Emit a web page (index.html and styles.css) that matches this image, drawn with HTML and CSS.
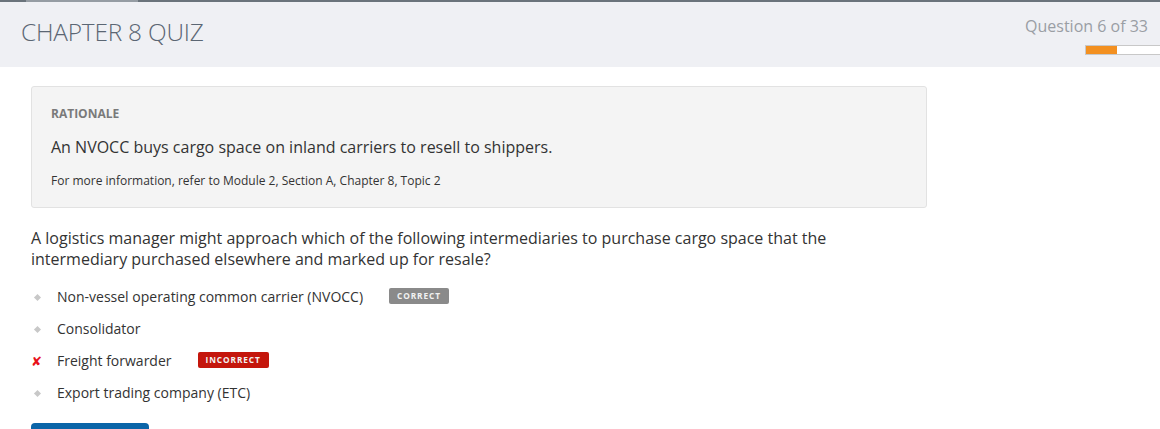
FILE: index.html
```html
<!DOCTYPE html>
<html>
<head>
<meta charset="utf-8">
<link rel="stylesheet" href="styles.css">
</head>
<body>
<div class="topline"><div class="topline-seg"></div></div>
<header class="header">
  <h1 class="title">CHAPTER 8 QUIZ</h1>
  <div class="progress-wrap">
    <div class="qcount">Question 6 of 33</div>
    <div class="progress"><div class="progress-fill" style="width:31px"></div></div>
  </div>
</header>
<main class="main">
  <section class="rationale">
    <div class="rationale-label">RATIONALE</div>
    <p class="rationale-text">An NVOCC buys cargo space on inland carriers to resell to shippers.</p>
    <p class="rationale-ref">For more information, refer to Module 2, Section A, Chapter 8, Topic 2</p>
  </section>
  <p class="question">A logistics manager might approach which of the following intermediaries to purchase cargo space that the intermediary purchased elsewhere and marked up for resale?</p>
  <ul class="options">
    <li class="option"><span class="mark"><span class="dot"></span></span><span class="opt-text">Non-vessel operating common carrier (NVOCC)</span><span class="badge badge-correct">CORRECT</span></li>
    <li class="option"><span class="mark"><span class="dot"></span></span><span class="opt-text">Consolidator</span></li>
    <li class="option"><span class="mark mark-x">✘</span><span class="opt-text">Freight forwarder</span><span class="badge badge-incorrect">INCORRECT</span></li>
    <li class="option"><span class="mark"><span class="dot"></span></span><span class="opt-text">Export trading company (ETC)</span></li>
  </ul>
  <div class="btn"></div>
</main>
</body>
</html>
```
FILE: styles.css
```css
* { box-sizing: border-box; }
html, body { margin: 0; padding: 0; }
body {
  font-family: "Open Sans", "Liberation Sans", sans-serif;
  color: #333;
  background: #fff;
  width: 1160px;
  height: 429px;
  overflow: hidden;
}
.topline {
  height: 2px;
  background: #6a737b;
  padding-left: 26px;
}
.topline-seg {
  width: 112px;
  height: 2px;
  background: #959ca3;
}
.header {
  height: 65px;
  background: #eff0f4;
  display: flex;
  justify-content: space-between;
  align-items: flex-start;
}
.title {
  margin: 0;
  padding: 15px 0 0 21px;
  font-size: 24.4px;
  line-height: 30px;
  font-weight: 300;
  color: #5b6673;
  letter-spacing: -0.2px;
}
.progress-wrap {
  display: flex;
  flex-direction: column;
  align-items: flex-end;
  padding-top: 13px;
}
.qcount {
  font-size: 16px;
  line-height: 22px;
  color: #9a9ea4;
  padding-right: 12px;
}
.progress {
  margin-top: 8px;
  width: 75px;
  height: 10px;
  border: 1px solid #c8c8c8;
  border-right: none;
  background: #fff;
}
.progress-fill {
  height: 100%;
  background: #f39020;
}
.main {
  padding: 19px 0 0 31px;
}
.rationale {
  width: 896px;
  background: #f4f4f4;
  border: 1px solid #e2e2e2;
  border-radius: 3px;
  padding: 18px 19px 18px;
}
.rationale-label {
  font-size: 12px;
  font-weight: 700;
  color: #7a7a7a;
  line-height: 17px;
}
.rationale-text {
  margin: 14px 0 0;
  font-size: 16px;
  line-height: 22px;
  color: #333;
}
.rationale-ref {
  margin: 14px 0 0;
  font-size: 12px;
  line-height: 17px;
  color: #333;
}
.question {
  margin: 20px 0 0;
  width: 820px;
  font-size: 16px;
  line-height: 21px;
  color: #333;
}
.options {
  list-style: none;
  margin: 11px 0 0;
  padding: 0;
}
.option {
  display: flex;
  align-items: center;
  height: 32px;
  font-size: 14px;
  color: #333;
}
.mark {
  width: 26px;
  display: flex;
  align-items: center;
  justify-content: flex-start;
  padding-left: 4px;
}
.dot {
  width: 5px;
  height: 5px;
  background: #c8c8c8;
  transform: rotate(45deg);
  display: block;
}
.mark-x {
  color: #e8101a;
  font-size: 13px;
  padding-left: 0;
  font-family: "DejaVu Sans", sans-serif;
}
.opt-text { line-height: 20px; }
.badge {
  display: inline-block;
  font-size: 8.3px;
  font-weight: 700;
  letter-spacing: 0.9px;
  color: #f2f2f2;
  border-radius: 2px;
  padding: 0 8px;
  line-height: 16px;
  height: 16px;
  margin-top: -2px;
}
.badge-correct { background: #8a8a8a; margin-left: 26px; }
.badge-incorrect { background: #c4160c; margin-left: 26px; }
.btn {
  margin-top: 14px;
  width: 118px;
  height: 12px;
  background: #0b65a8;
  border-radius: 4px 4px 0 0;
}
```
